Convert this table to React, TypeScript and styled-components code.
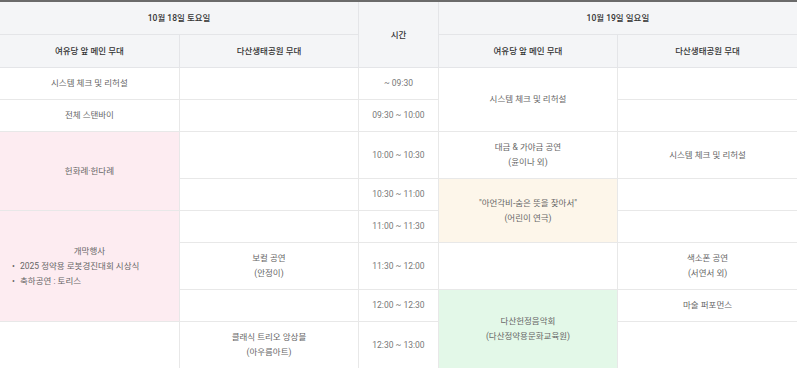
import styled, { createGlobalStyle } from "styled-components";

const GlobalStyle = createGlobalStyle`
  html, body {
    margin: 0;
    padding: 0;
    background: #fff;
  }
  body {
    font-family: Roboto, "Noto Sans CJK KR", sans-serif;
  }
`;

const ScheduleTable = styled.table`
  width: 797px;
  border-collapse: collapse;
  table-layout: fixed;
  border-top: 2px solid #6b6b6b;
  font-size: 8.5px;
  line-height: 15px;
`;

const HeadCell = styled.th`
  background-color: #f4f5f7;
  color: #333;
  font-weight: 500;
  text-align: center;
  vertical-align: middle;
  padding: 9px 8px 8px;
  border: 1px solid #e4e5e8;
  border-top: none;

  &:first-child {
    border-left: none;
  }
  &:last-child {
    border-right: none;
  }
`;

type Tone = "plain" | "pink" | "beige" | "green";

const toneColors: Record<Tone, string> = {
  plain: "#ffffff",
  pink: "#fdecf1",
  beige: "#fdf6ea",
  green: "#e3f8e8",
};

const Cell = styled.td<{ $tone?: Tone }>`
  background-color: ${({ $tone }) => toneColors[$tone ?? "plain"]};
  color: #666;
  text-align: center;
  vertical-align: middle;
  padding: 8px 8px;
  border: 1px solid #e8e8e8;

  &:first-child {
    border-left: none;
  }
  &:last-child {
    border-right: none;
  }
`;

const TimeCell = styled(Cell)`
  color: #777;
  white-space: nowrap;
`;

const BulletList = styled.ul`
  list-style: none;
  margin: 0;
  padding: 0 0 0 4px;
  text-align: left;

  li::before {
    content: "•";
    display: inline-block;
    width: 8px;
  }
`;

const Col = styled.col<{ $w: string }>`
  width: ${({ $w }) => $w};
`;

function App() {
  return (
    <>
      <GlobalStyle />
      <ScheduleTable>
        <colgroup>
          <Col $w="22.5%" />
          <Col $w="22.5%" />
          <Col $w="10%" />
          <Col $w="22.5%" />
          <Col $w="22.5%" />
        </colgroup>
        <thead>
          <tr>
            <HeadCell colSpan={2}>10월 18일 토요일</HeadCell>
            <HeadCell rowSpan={2}>시간</HeadCell>
            <HeadCell colSpan={2}>10월 19일 일요일</HeadCell>
          </tr>
          <tr>
            <HeadCell>여유당 앞 메인 무대</HeadCell>
            <HeadCell>다산생태공원 무대</HeadCell>
            <HeadCell>여유당 앞 메인 무대</HeadCell>
            <HeadCell>다산생태공원 무대</HeadCell>
          </tr>
        </thead>
        <tbody>
          <tr>
            <Cell>시스템 체크 및 리허설</Cell>
            <Cell />
            <TimeCell>~ 09:30</TimeCell>
            <Cell rowSpan={2}>시스템 체크 및 리허설</Cell>
            <Cell />
          </tr>
          <tr>
            <Cell>전체 스탠바이</Cell>
            <Cell />
            <TimeCell>09:30 ~ 10:00</TimeCell>
            <Cell />
          </tr>
          <tr>
            <Cell $tone="pink" rowSpan={2}>
              헌화례·헌다례
            </Cell>
            <Cell />
            <TimeCell>10:00 ~ 10:30</TimeCell>
            <Cell>
              대금 &amp; 가야금 공연
              <br />
              (윤이나 외)
            </Cell>
            <Cell>시스템 체크 및 리허설</Cell>
          </tr>
          <tr>
            <Cell />
            <TimeCell>10:30 ~ 11:00</TimeCell>
            <Cell $tone="beige" rowSpan={2}>
              "아언각비-숨은 뜻을 찾아서"
              <br />
              (어린이 연극)
            </Cell>
            <Cell />
          </tr>
          <tr>
            <Cell $tone="pink" rowSpan={3}>
              개막행사
              <BulletList>
                <li>2025 정약용 로봇경진대회 시상식</li>
                <li>축하공연 : 토리스</li>
              </BulletList>
            </Cell>
            <Cell />
            <TimeCell>11:00 ~ 11:30</TimeCell>
            <Cell />
          </tr>
          <tr>
            <Cell>
              보컬 공연
              <br />
              (안정이)
            </Cell>
            <TimeCell>11:30 ~ 12:00</TimeCell>
            <Cell />
            <Cell>
              색소폰 공연
              <br />
              (서연서 외)
            </Cell>
          </tr>
          <tr>
            <Cell />
            <TimeCell>12:00 ~ 12:30</TimeCell>
            <Cell $tone="green" rowSpan={2}>
              다산헌정음악회
              <br />
              (다산정약용문화교육원)
            </Cell>
            <Cell>마술 퍼포먼스</Cell>
          </tr>
          <tr>
            <Cell />
            <Cell>
              클래식 트리오 앙상블
              <br />
              (아우름아트)
            </Cell>
            <TimeCell>12:30 ~ 13:00</TimeCell>
            <Cell />
          </tr>
        </tbody>
      </ScheduleTable>
    </>
  );
}

export default App;
